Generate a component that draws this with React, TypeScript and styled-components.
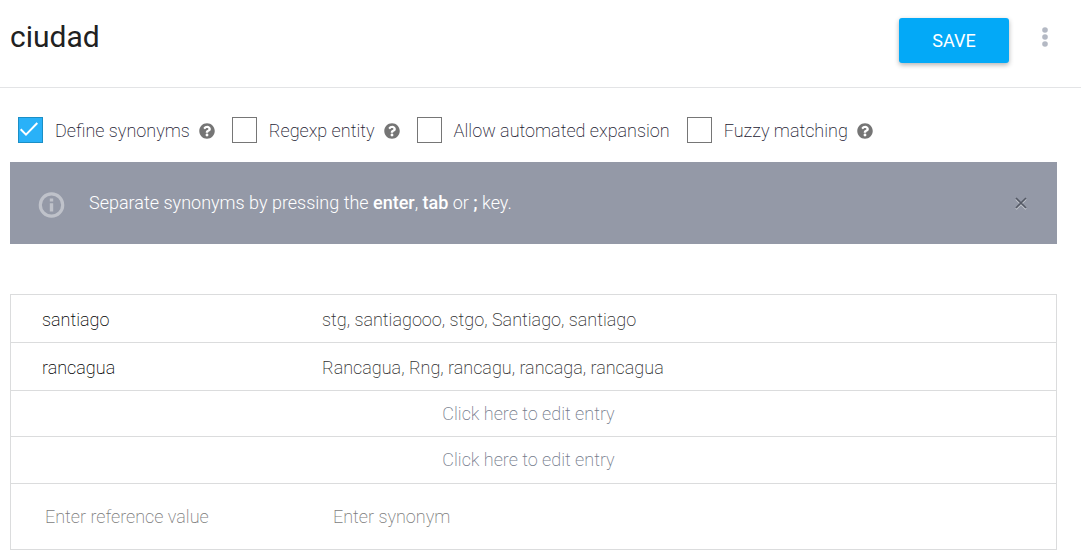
import React, { useState } from "react";
import styled, { createGlobalStyle } from "styled-components";
import { FaQuestionCircle } from "react-icons/fa";

const GlobalStyle = createGlobalStyle`
  * { box-sizing: border-box; }
  body {
    margin: 0;
    background: #fff;
    color: #1c2132;
    font-family: Roboto, "Liberation Sans", sans-serif;
    font-size: 18px;
    font-weight: 200;
    line-height: 24px;
  }
  button, input { font: inherit; color: inherit; }
`;

const Header = styled.header`
  display: flex;
  align-items: center;
  justify-content: space-between;
  height: 88px;
  padding: 0 28px 6px 10px;
  border-bottom: 1px solid #e3e4e6;
`;

const Title = styled.h1`
  margin: 0;
  padding-bottom: 8px;
  font-size: 30px;
  line-height: 36px;
  font-weight: 400;
  color: #212121;
`;

const Actions = styled.div`
  display: flex;
  align-items: center;
  gap: 28px;
`;

const SaveButton = styled.button`
  width: 110px;
  height: 45px;
  padding: 0;
  border: 0;
  border-radius: 3px;
  background: #03a9f7;
  color: #fff;
  font-weight: 400;
  box-shadow: 0 2px 5px rgba(0, 0, 0, 0.3);
  cursor: pointer;
`;

const IconButton = styled.button`
  display: grid;
  place-items: center;
  padding: 0;
  border: 0;
  background: none;
  cursor: pointer;
`;

const MenuButton = styled(IconButton)`
  width: 16px;
  height: 32px;
  padding-bottom: 8px;
`;

const Main = styled.main`
  padding: 29px 24px 10px 10px;
`;

const Options = styled.div`
  display: flex;
  flex-wrap: wrap;
  align-items: center;
  gap: 8px 17px;
  padding: 0 8px;
`;

const Option = styled.div`
  display: flex;
  align-items: center;
  gap: 9px;
`;

const OptionLabel = styled.label`
  display: flex;
  align-items: center;
  gap: 12px;
  cursor: pointer;
`;

const OptionText = styled.span`
  padding-top: 2px;
`;

const Check = styled.span`
  display: grid;
  place-items: center;

  > * { grid-area: 1 / 1; }
  svg { pointer-events: none; }
`;

const CheckInput = styled.input`
  appearance: none;
  width: 25px;
  height: 26px;
  margin: 0;
  border: 1px solid #767676;
  background: #fff;
  cursor: pointer;

  &:checked {
    border-color: #1b8fc6;
    background: #29b1f8;
  }
`;

const HelpButton = styled(IconButton)`
  padding-top: 2px;
  color: #757575;
`;

const Notice = styled.section`
  display: flex;
  align-items: center;
  height: 82px;
  margin-top: 19px;
  padding: 0 29px 0 28px;
  background: #9499a7;
  color: #fff;

  > svg { flex: none; margin-top: 4px; }
`;

const NoticeText = styled.p`
  flex: 1;
  margin: 0 24px;
  font-weight: 300;

  strong { font-weight: 500; }
`;

const Entries = styled.table`
  width: 100%;
  margin-top: 50px;
  border: solid #dbdcdd;
  border-width: 0 1px 1px;
  border-spacing: 0;
  table-layout: fixed;
`;

const ReferenceCol = styled.col`
  width: 280px;
`;

const Row = styled.tr<{ $height: number }>`
  height: ${(p) => p.$height}px;

  > * { border-top: 1px solid #dbdcdd; }
`;

const Reference = styled.th`
  padding: 2px 0 0 31px;
  font-weight: inherit;
  text-align: left;
  color: #000;
`;

const Synonyms = styled.td`
  padding: 2px 0 0 31px;
  color: #303030;
`;

const EmptyCell = styled.td`
  padding: 0 10px 0 0;
  text-align: center;
`;

const EditButton = styled.button`
  padding: 0;
  border: 0;
  background: none;
  color: #747b8b;
  cursor: pointer;
`;

const InputCell = styled.td<{ $indent: number }>`
  padding: 0 24px 0 ${(p) => p.$indent}px;
`;

const TextInput = styled.input`
  width: 100%;
  height: 24px;
  padding: 0;
  border: 0;
  outline: 0;
  background: none;

  &::placeholder { color: #7c7c7c; opacity: 1; }
`;

const options = [
  { id: "synonyms", label: "Define synonyms", help: true },
  { id: "regexp", label: "Regexp entity", help: true },
  { id: "expansion", label: "Allow automated expansion", help: false },
  { id: "fuzzy", label: "Fuzzy matching", help: true },
];

const entries = [
  { value: "santiago", synonyms: ["stg", "santiagooo", "stgo", "Santiago", "santiago"] },
  { value: "rancagua", synonyms: ["Rancagua", "Rng", "rancagu", "rancaga", "rancagua"] },
];

const emptyRowHeights = [46, 47];

export default function App() {
  const [checked, setChecked] = useState<Record<string, boolean>>({ synonyms: true });

  return (
    <>
      <GlobalStyle />
      <Header>
        <Title>ciudad</Title>
        <Actions>
          <SaveButton type="button">SAVE</SaveButton>
          <MenuButton type="button" aria-label="More options">
            <svg width="6" height="20" viewBox="0 0 6 20" fill="#b4b9c4">
              <circle cx="3" cy="3" r="2.8" />
              <circle cx="3" cy="10" r="2.8" />
              <circle cx="3" cy="17" r="2.8" />
            </svg>
          </MenuButton>
        </Actions>
      </Header>
      <Main>
        <Options>
          {options.map((o) => (
            <Option key={o.id}>
              <OptionLabel htmlFor={o.id}>
                <Check>
                  <CheckInput
                    id={o.id}
                    type="checkbox"
                    checked={!!checked[o.id]}
                    onChange={(e) => setChecked({ ...checked, [o.id]: e.target.checked })}
                  />
                  {checked[o.id] && (
                    <svg width="25" height="26" viewBox="0 0 25 26" fill="none" stroke="#fff" strokeWidth="2">
                      <path d="M2.7 12.2 8 17.6 19.3 6" />
                    </svg>
                  )}
                </Check>
                <OptionText>{o.label}</OptionText>
              </OptionLabel>
              {o.help && (
                <HelpButton type="button" aria-label={`Help: ${o.label}`}>
                  <FaQuestionCircle size={16} />
                </HelpButton>
              )}
            </Option>
          ))}
        </Options>

        <Notice>
          <svg width="27" height="26" viewBox="0 0 27 26" fill="none">
            <circle cx="13.5" cy="13" r="11.2" stroke="#bfc2ca" strokeWidth="3.2" />
            <path d="M13.5 6.5v3M13.5 11.2v8.2" stroke="#bfc2ca" strokeWidth="3.4" />
          </svg>
          <NoticeText>
            Separate synonyms by pressing the <strong>enter</strong>, <strong>tab</strong> or <strong>;</strong> key.
          </NoticeText>
          <IconButton type="button" aria-label="Dismiss">
            <svg width="14" height="14" viewBox="0 0 14 14" fill="none" strokeWidth="1.7">
              <path d="m2 3.2 10 10m0-10-10 10" stroke="#c6c9d0" />
              <path d="m2 2 10 10m0-10-10 10" stroke="#555a66" />
            </svg>
          </IconButton>
        </Notice>

        <Entries>
          <colgroup>
            <ReferenceCol />
            <col />
          </colgroup>
          <tbody>
            {entries.map((e) => (
              <Row key={e.value} $height={48}>
                <Reference scope="row">{e.value}</Reference>
                <Synonyms>{e.synonyms.join(", ")}</Synonyms>
              </Row>
            ))}
            {emptyRowHeights.map((height) => (
              <Row key={height} $height={height}>
                <EmptyCell colSpan={2}>
                  <EditButton type="button">Click here to edit entry</EditButton>
                </EmptyCell>
              </Row>
            ))}
            <Row $height={66}>
              <InputCell $indent={34}>
                <TextInput aria-label="Reference value" placeholder="Enter reference value" />
              </InputCell>
              <InputCell $indent={42}>
                <TextInput aria-label="Synonym" placeholder="Enter synonym" />
              </InputCell>
            </Row>
          </tbody>
        </Entries>
      </Main>
    </>
  );
}
